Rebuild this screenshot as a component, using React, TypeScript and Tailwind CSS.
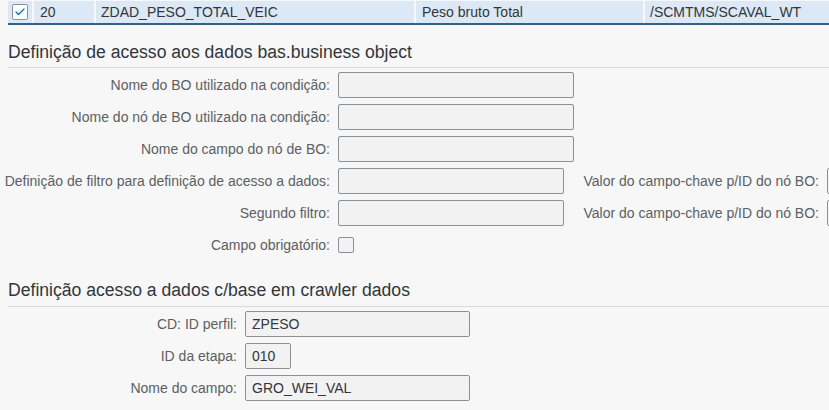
import { Check } from 'lucide-react';

const font = { fontFamily: '"Liberation Sans", Arial, sans-serif' };

function Field({ label, value, w, lw }: { label: string; value?: string; w: string; lw: string }) {
  return (
    <div className="flex items-center h-[32px]">
      <div className={`${lw} shrink-0 text-right pr-[8px] text-[14px] text-[#5b5f63]`}>{label}</div>
      <div className={`${w} h-[26px] shrink-0 bg-[#f2f2f2] border border-[#89919a] rounded-[2px] px-[6px] flex items-center text-[14px] text-[#32363a]`}>
        {value}
      </div>
    </div>
  );
}

export default function App() {
  return (
    <div className="w-[829px] h-[410px] overflow-hidden bg-[#f7f7f7]" style={font}>
      {/* table row */}
      <div className="pl-[8px] pt-[1px]">
        <div className="flex h-[24px] bg-[#dce8f5] border-b-2 border-[#346187] text-[14px] text-[#32363a] whitespace-nowrap">
          <div className="w-[26px] flex items-center justify-center border-r-2 border-[#f7f7f7]">
            <div className="w-[16px] h-[16px] bg-white border border-[#89919a] rounded-[2px] flex items-center justify-center">
              <Check size={12} strokeWidth={2.5} className="text-[#0a6ed1]" />
            </div>
          </div>
          <div className="w-[62px] pl-[6px] flex items-center border-r-2 border-[#f7f7f7]">20</div>
          <div className="w-[320px] pl-[5px] flex items-center border-r-2 border-[#f7f7f7]">ZDAD_PESO_TOTAL_VEIC</div>
          <div className="w-[229px] pl-[6px] flex items-center border-r-2 border-[#f7f7f7]">Peso bruto Total</div>
          <div className="flex-1 pl-[5px] flex items-center">/SCMTMS/SCAVAL_WT</div>
        </div>
      </div>

      {/* section 1 */}
      <div className="ml-[8px] mt-[16px] pb-[4px] border-b border-[#d9d9d9] text-[17.6px] text-[#32363a] leading-[22px]">
        Definição de acesso aos dados bas.business object
      </div>
      <div className="pt-[1px]">
        <Field label="Nome do BO utilizado na condição:" w="w-[236px]" lw="w-[338px]" />
        <Field label="Nome do nó de BO utilizado na condição:" w="w-[236px]" lw="w-[338px]" />
        <Field label="Nome do campo do nó de BO:" w="w-[236px]" lw="w-[338px]" />
        <div className="flex items-center">
          <Field label="Definição de filtro para definição de acesso a dados:" w="w-[226px]" lw="w-[338px]" />
          <Field label="Valor do campo-chave p/ID do nó BO:" w="w-[20px]" lw="w-[263px]" />
        </div>
        <div className="flex items-center">
          <Field label="Segundo filtro:" w="w-[226px]" lw="w-[338px]" />
          <Field label="Valor do campo-chave p/ID do nó BO:" w="w-[20px]" lw="w-[263px]" />
        </div>
        <div className="flex items-center h-[32px]">
          <div className="w-[338px] text-right pr-[8px] text-[14px] text-[#5b5f63]">Campo obrigatório:</div>
          <div className="w-[16px] h-[16px] bg-[#f2f2f2] border border-[#89919a] rounded-[2px]" />
        </div>
      </div>

      {/* section 2 */}
      <div className="ml-[8px] mt-[18px] pb-[5px] border-b border-[#d9d9d9] text-[17.6px] text-[#32363a] leading-[22px]">
        Definição acesso a dados c/base em crawler dados
      </div>
      <div className="pt-[1px]">
        <Field label="CD: ID perfil:" value="ZPESO" w="w-[225px]" lw="w-[245px]" />
        <Field label="ID da etapa:" value="010" w="w-[46px]" lw="w-[245px]" />
        <Field label="Nome do campo:" value="GRO_WEI_VAL" w="w-[225px]" lw="w-[245px]" />
      </div>
    </div>
  );
}
